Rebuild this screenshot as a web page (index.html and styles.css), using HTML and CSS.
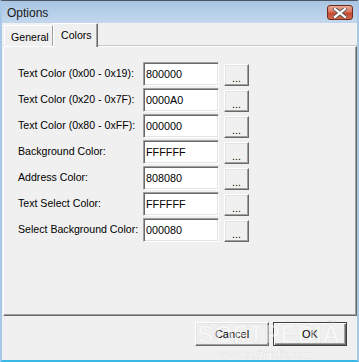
FILE: index.html
```html
<!DOCTYPE html>
<html>
<head>
    <link rel="stylesheet" href="styles.css">
</head>
<body>
    <div class="window">
        <div class="titlebar">
            <span class="title">Options</span>
            <div class="close-btn">
                <svg width="14" height="10" viewBox="0 0 14 10">
                    <path d="M2 1 L12 9 M12 1 L2 9" stroke="#5a5a5a" stroke-width="4" stroke-linecap="square"/>
                    <path d="M2 1 L12 9 M12 1 L2 9" stroke="#ffffff" stroke-width="2.2" stroke-linecap="square"/>
                </svg>
            </div>
        </div>
        <div class="client">
            <div class="tabs">
                <div class="tab">General</div>
                <div class="tab active">Colors</div>
            </div>
            <div class="panel">
                <div class="row">
                    <label>Text Color (0x00 - 0x19):</label>
                    <input class="field" type="text" value="800000">
                    <button class="pick">...</button>
                </div>
                <div class="row">
                    <label>Text Color (0x20 - 0x7F):</label>
                    <input class="field" type="text" value="0000A0">
                    <button class="pick">...</button>
                </div>
                <div class="row">
                    <label>Text Color (0x80 - 0xFF):</label>
                    <input class="field" type="text" value="000000">
                    <button class="pick">...</button>
                </div>
                <div class="row">
                    <label>Background Color:</label>
                    <input class="field" type="text" value="FFFFFF">
                    <button class="pick">...</button>
                </div>
                <div class="row">
                    <label>Address Color:</label>
                    <input class="field" type="text" value="808080">
                    <button class="pick">...</button>
                </div>
                <div class="row">
                    <label>Text Select Color:</label>
                    <input class="field" type="text" value="FFFFFF">
                    <button class="pick">...</button>
                </div>
                <div class="row">
                    <label>Select Background Color:</label>
                    <input class="field" type="text" value="000080">
                    <button class="pick">...</button>
                </div>
            </div>
            <div class="footer">
                <button class="btn">Cancel</button>
                <button class="btn default">OK</button>
            </div>
        </div>
        <div class="watermark">
            <span class="wm-big">SOFTPEDIA</span>
            <span class="wm-tm">™</span>
            <span class="wm-url">www.softpedia.com</span>
        </div>
    </div>
</body>
</html>
```

FILE: styles.css
```css
html, body {
    margin: 0;
    padding: 0;
    background: #f0f0f0;
}
body {
    width: 359px;
    height: 362px;
    overflow: hidden;
    font-family: "Liberation Sans", Arial, sans-serif;
    font-size: 10.6px;
    color: #000;
}
.window {
    position: relative;
    box-sizing: border-box;
    width: 359px;
    height: 362px;
    display: flex;
    flex-direction: column;
    border-top: 1px solid #4a5866;
    border-left: 2px solid #a9c8e8;
    border-right: 2px solid #a9c8e8;
    border-bottom: 2px solid #3ab8e6;
    background: #f0f0f0;
}
.titlebar {
    height: 22px;
    flex: none;
    display: flex;
    align-items: center;
    justify-content: space-between;
    padding: 0 4px 0 5px;
    background: linear-gradient(to bottom, #a9c4e2, #c3d8ee);
}
.title {
    font-size: 12px;
    color: #1a1a1a;
    margin-top: 2px;
}
.close-btn {
    width: 24px;
    height: 13px;
    margin-top: 1px;
    border: 1px solid #6e2a1e;
    border-radius: 3px;
    background: linear-gradient(to bottom, #e7a897 0%, #d9745e 45%, #c24a32 55%, #d0664c 100%);
    display: flex;
    align-items: center;
    justify-content: center;
}
.client {
    flex: 1;
    display: flex;
    flex-direction: column;
    padding-left: 1px;
}
.tabs {
    height: 23px;
    flex: none;
    display: flex;
    align-items: flex-end;
    padding-left: 1px;
    position: relative;
    z-index: 1;
}
.tab {
    box-sizing: border-box;
    height: 21px;
    padding: 5px 0 0 6px;
    width: 49px;
    white-space: nowrap;
    border-top: 1px solid #fff;
    border-left: 1px solid #fff;
    border-right: 1px solid #a0a0a0;
    background: #f0f0f0;
}
.tab.active {
    height: 24px;
    width: 45px;
    margin-bottom: -1px;
    padding: 5px 0 0 7px;
    border-right: 1px solid #696969;
    box-shadow: inset -1px 0 #a0a0a0;
}
.panel {
    box-sizing: border-box;
    height: 270px;
    flex: none;
    border-top: 1px solid #fff;
    border-left: 1px solid #fff;
    border-right: 1px solid #696969;
    border-bottom: 1px solid #696969;
    box-shadow: inset -1px -1px #a0a0a0, 0 -1px #c8c8c8;
    padding: 15px 0 0 14px;
    display: flex;
    flex-direction: column;
    gap: 2px;
}
.row {
    display: flex;
    align-items: center;
    height: 24px;
}
.row label {
    width: 125px;
    margin-top: -3px;
    white-space: nowrap;
}
.field {
    box-sizing: border-box;
    width: 76px;
    height: 24px;
    margin: 0;
    padding: 0 0 0 2px;
    font-family: inherit;
    font-size: 10.8px;
    background: #fff;
    border: 1px solid;
    border-color: #a0a0a0 #fff #fff #a0a0a0;
    box-shadow: inset 1px 1px #696969, inset -1px -1px #e3e3e3;
    outline: none;
}
.pick {
    box-sizing: border-box;
    width: 25px;
    height: 22px;
    margin: 1px 0 0 5px;
    padding: 6px 0 0;
    font-family: inherit;
    font-size: 10.6px;
    background: #f0f0f0;
    border: 1px solid;
    border-color: #fff #696969 #696969 #fff;
    box-shadow: inset -1px -1px #a0a0a0, inset 1px 1px #e3e3e3;
}
.footer {
    flex: 1;
    display: flex;
    justify-content: flex-end;
    align-items: flex-start;
    gap: 4px;
    padding: 6px 10px 0 0;
}
.btn {
    box-sizing: border-box;
    width: 74px;
    height: 24px;
    margin: 0;
    font-family: inherit;
    font-size: 11px;
    background: #f0f0f0;
    border: 1px solid;
    border-color: #fff #696969 #696969 #fff;
    box-shadow: inset -1px -1px #a0a0a0, inset 1px 1px #e3e3e3;
}
.btn.default {
    border: 1px solid #404040;
    box-shadow: inset 1px 1px #fff, inset -1px -1px #696969, inset -2px -2px #a0a0a0;
}
.watermark {
    position: absolute;
    left: 195px;
    top: 315px;
    width: 140px;
    height: 45px;
    pointer-events: none;
    color: rgba(255, 255, 255, 0.45);
}
.wm-big {
    position: absolute;
    left: 0;
    top: 4px;
    font-family: "Liberation Sans", sans-serif;
    font-size: 25px;
    font-weight: bold;
    letter-spacing: 0;
    -webkit-text-stroke: 0.4px rgba(160, 160, 160, 0.3);
}
.wm-tm {
    position: absolute;
    left: 130px;
    top: 3px;
    font-size: 8px;
    color: rgba(170, 170, 170, 0.5);
}
.wm-url {
    position: absolute;
    left: 22px;
    top: 33px;
    font-size: 10px;
    font-weight: bold;
    color: rgba(255, 255, 255, 0.8);
    -webkit-text-stroke: 0.3px rgba(150, 150, 150, 0.35);
}
```
